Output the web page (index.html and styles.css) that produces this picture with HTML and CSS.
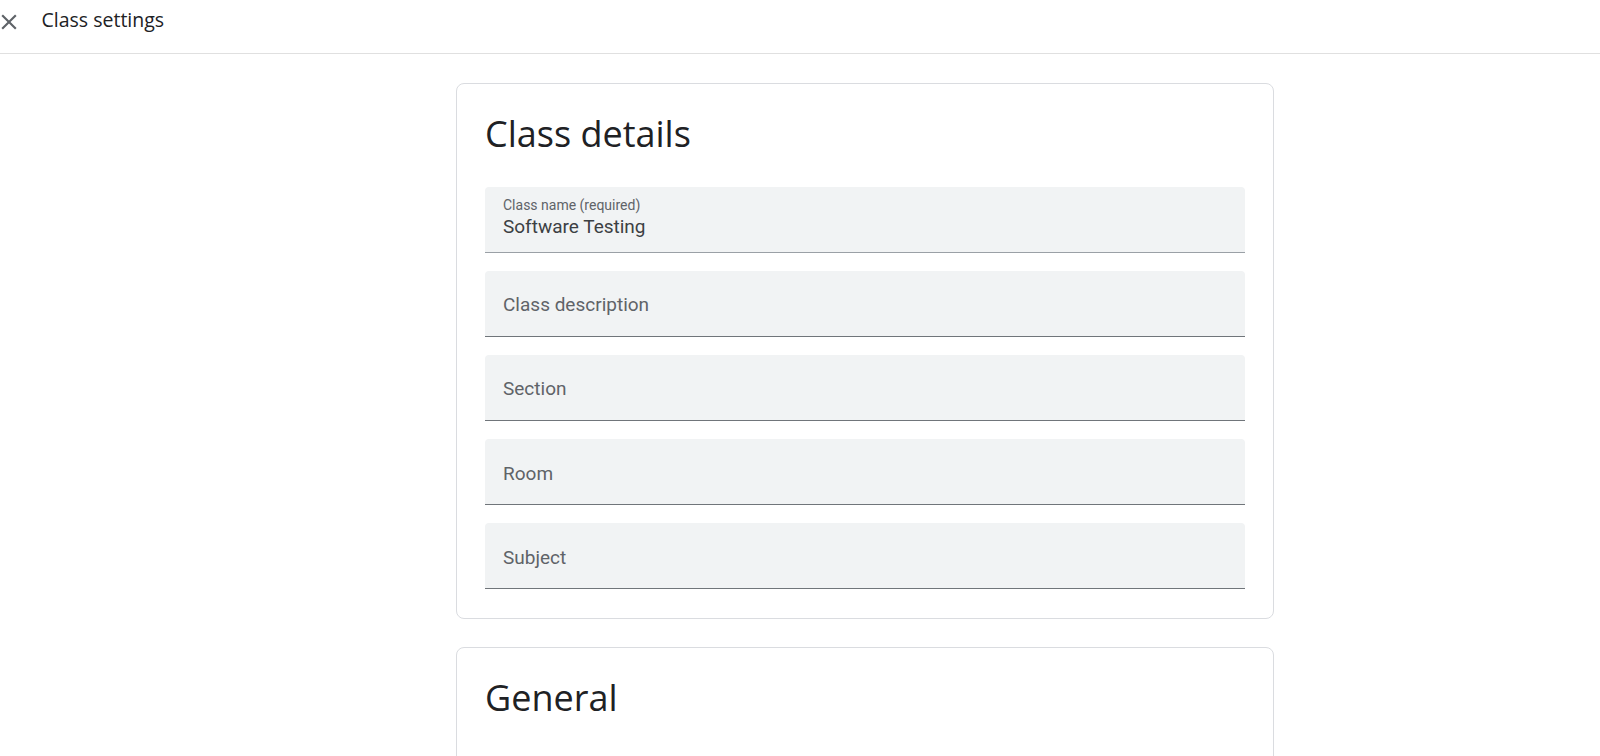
FILE: index.html
```html
<!DOCTYPE html>
<html>
<head>
<meta charset="utf-8">
<link rel="stylesheet" href="styles.css">
</head>
<body>
<header class="topbar">
  <svg class="close-icon" viewBox="0 0 24 24" width="26" height="26"><path d="M19 6.41L17.59 5 12 10.59 6.41 5 5 6.41 10.59 12 5 17.59 6.41 19 12 13.41 17.59 19 19 17.59 13.41 12z" fill="#5f6368"/></svg>
  <span class="topbar-title">Class settings</span>
</header>
<main class="content">
  <section class="card">
    <h2 class="card-title">Class details</h2>
    <div class="fields">
      <div class="field filled">
        <div class="field-label">Class name (required)</div>
        <div class="field-value">Software Testing</div>
      </div>
      <div class="field"><div class="field-placeholder">Class description</div></div>
      <div class="field"><div class="field-placeholder">Section</div></div>
      <div class="field"><div class="field-placeholder">Room</div></div>
      <div class="field"><div class="field-placeholder">Subject</div></div>
    </div>
  </section>
  <section class="card card-general">
    <h2 class="card-title">General</h2>
  </section>
</main>
</body>
</html>
```

FILE: styles.css
```css
html, body {
  margin: 0;
  padding: 0;
  background: #fff;
}
body {
  height: 756px;
  overflow: hidden;
  display: flex;
  flex-direction: column;
  font-family: Roboto, "Liberation Sans", sans-serif;
  color: #202124;
}
.topbar {
  flex: none;
  height: 53px;
  box-sizing: content-box;
  border-bottom: 1px solid #e0e0e0;
  display: flex;
  align-items: flex-start;
}
.close-icon {
  flex: none;
  margin-left: -4px;
  margin-top: 9px;
  width: 26px;
  height: 26px;
}
.topbar-title {
  margin-left: 19.5px;
  margin-top: 7.5px;
  font-family: "Open Sans", sans-serif;
  font-size: 19.5px;
  line-height: 24px;
  color: #202124;
}
.content {
  flex: 1;
  min-height: 0;
  overflow: hidden;
  padding-top: 29px;
  padding-left: 456px;
}
.card {
  width: 818px;
  box-sizing: border-box;
  border: 1px solid #dadce0;
  border-radius: 8px;
  padding: 26px 28px 29px 28px;
  margin-bottom: 27.5px;
}
.card-title {
  margin: 0 0 28.5px 0;
  font-family: "Open Sans", sans-serif;
  font-weight: 400;
  font-size: 36px;
  line-height: 48px;
  color: #202124;
}
.fields {
  display: flex;
  flex-direction: column;
  gap: 18.2px;
}
.field {
  height: 65px;
  box-sizing: content-box;
  background: #f1f3f4;
  border-bottom: 1px solid #70757a;
  border-radius: 4px 4px 0 0;
  padding: 0 18px;
}
.field.filled {
  border-bottom-color: #9aa0a6;
}
.field-label {
  padding-top: 10px;
  font-size: 14px;
  line-height: 16px;
  color: #5f6368;
}
.field-value {
  margin-top: 2.5px;
  font-size: 19px;
  line-height: 24px;
  color: #3c4043;
}
.field-placeholder {
  padding-top: 22.5px;
  font-size: 19px;
  line-height: 24px;
  color: #5f6368;
}
.card-general {
  height: 200px;
  flex: none;
}
```
